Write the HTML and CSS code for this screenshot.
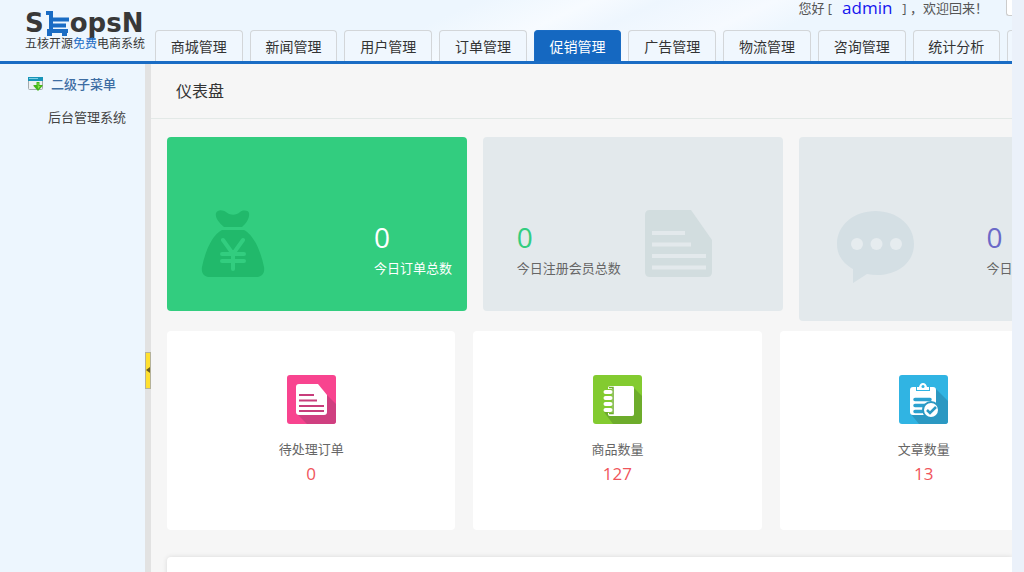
FILE: index.html
```html
<!DOCTYPE html>
<html lang="zh-CN">
<head>
<meta charset="utf-8">
<title>五核开源免费电商系统</title>
<link rel="stylesheet" href="styles.css">
</head>
<body>
<div class="page">
  <header class="header">
    <a class="logo" href="#">
      <span class="logo-name">S<svg class="logo-cart" viewBox="0 0 23 25" aria-hidden="true"><path d="M0 2h5v19M5 8.500h18M5 14.500h15M3 20h19" fill="none" stroke="#1a6cc4" stroke-width="4"/><path d="M1 18h5v7H1zM16 18h5v7h-5z" fill="#1a6cc4"/></svg>opsN</span>
      <span class="logo-sub">五核开源<em>免费</em>电商系统</span>
    </a>
    <div class="header-main">
      <div class="welcome"><span>您好 [</span><a class="user" href="#">admin</a><span>] ，欢迎回来！</span><button class="top-button" type="button" aria-label="更多"></button></div>
      <nav class="tabs">
        <a class="tab" href="#">商城管理</a>
        <a class="tab" href="#">新闻管理</a>
        <a class="tab" href="#">用户管理</a>
        <a class="tab" href="#">订单管理</a>
        <a class="tab tab-active" href="#">促销管理</a>
        <a class="tab" href="#">广告管理</a>
        <a class="tab" href="#">物流管理</a>
        <a class="tab" href="#">咨询管理</a>
        <a class="tab" href="#">统计分析</a>
        <a class="tab" href="#" aria-label="更多"></a>
      </nav>
    </div>
  </header>
  <div class="body">
    <aside class="sidebar">
      <div class="menu-title"><svg class="menu-icon" viewBox="0 0 15 14" aria-hidden="true"><rect x=".5" y=".5" width="14" height="12" rx="1" fill="#eef0f1" stroke="#a3aaad"/><path d="M0 0h15v4H0z" fill="#1794b8"/><path d="M1 1h9v1H1z" fill="#7fd0e4"/><path d="M8.500 5h3v3h3v1l-4.500 5-4.500-5V8h3z" fill="#43b516"/><path d="M9.500 6h1v3h2l-2.500 3z" fill="#8ee04e"/></svg><span>二级子菜单</span></div>
      <a class="menu-item" href="#">后台管理系统</a>
    </aside>
    <div class="splitter"><button class="handle" type="button" aria-label="收起菜单"><svg viewBox="0 0 4 6" width="4" height="6"><path d="M4 0v6L0 3z" fill="#6b5d20"/></svg></button></div>
    <main class="main">
      <h1 class="title">仪表盘</h1>
      <div class="content">
        <section class="stats">
          <div class="stat stat-green">
            <svg class="stat-icon" viewBox="0 0 64 67" aria-hidden="true"><path d="M23 17C17 12 14 7 15 3c2-4 7-3 10-1 3 3 10 4 14 0 3-2 8-2 9 1 1 5-3 11-7 14zM21 20h22c10 5 17 22 20 37 1 6-2 10-8 10H9c-6 0-9-4-8-10 3-15 10-32 20-37z" fill="#21b96b"/><path d="M22 30l10 14 10-14M32 44v15M21 44h22M21 51h22" fill="none" stroke="#32cd7f" stroke-width="4" stroke-linecap="round"/></svg>
            <div class="stat-text"><strong>0</strong><span>今日订单总数</span></div>
          </div>
          <div class="stat stat-doc">
            <div class="stat-text"><strong>0</strong><span>今日注册会员总数</span></div>
            <svg class="stat-icon" viewBox="0 0 67 67" aria-hidden="true"><path d="M5 0h41l21 30v32q0 5-5 5H5q-5 0-5-5V5q0-5 5-5z" fill="#d2dddf"/><path d="M7 23h33M7 34.500h39M7 46h54M7 57.500h54" stroke="#e3e9ec" stroke-width="4"/></svg>
          </div>
          <div class="stat stat-ask">
            <svg class="stat-icon" viewBox="0 0 77 75" aria-hidden="true"><path d="M38.500 1C60 1 77 15 77 34c0 22-23 35-47 30L16 73V59C5 53 0 44 0 34 0 15 17 1 38.500 1z" fill="#d4dfe4"/><g fill="#e6ecef"><circle cx="20" cy="34" r="6"/><circle cx="39.500" cy="34" r="6"/><circle cx="59" cy="34" r="6"/></g></svg>
            <div class="stat-text"><strong>0</strong><span>今日提问总数</span></div>
          </div>
        </section>
        <section class="tiles">
          <a class="tile" href="#">
            <svg class="tile-icon" viewBox="0 0 49 49" aria-hidden="true"><rect width="49" height="49" rx="3" fill="#f8448f"/><path d="M40 20l9 9v17q0 3-3 3H20L9 38z" fill="#cf3f80"/><path d="M12 9h19l9 11v17q0 3-3 3H12q-3 0-3-3V12q0-3 3-3z" fill="#fff"/><path d="M12 20h15M12 25.500h18M12 31h25M12 36h25" stroke="#c83d7b" stroke-width="2"/></svg>
            <span>待处理订单</span><strong>0</strong>
          </a>
          <a class="tile" href="#">
            <svg class="tile-icon" viewBox="0 0 49 49" aria-hidden="true"><rect width="49" height="49" rx="3" fill="#83cb30"/><path d="M40 12l9 9v25q0 3-3 3H20L11 37z" fill="#6dac2b"/><rect x="15" y="11" width="26" height="30" rx="2" fill="#fff"/><path d="M16 12.500h4v26h-4" fill="none" stroke="#6dac2b" stroke-width="1.500"/><path d="M15 14h4v24h-4z" fill="#83cb30"/><path d="M12.500 17h5M12.500 23h5M12.500 29h5M12.500 35h5" stroke="#fff" stroke-width="4" stroke-linecap="round"/></svg>
            <span>商品数量</span><strong>127</strong>
          </a>
          <a class="tile" href="#">
            <svg class="tile-icon" viewBox="0 0 49 49" aria-hidden="true"><rect width="49" height="49" rx="3" fill="#30b4e3"/><path d="M37 14l12 12v20q0 3-3 3H20L11 38z" fill="#2b98c2"/><path d="M14 12h3v4h14v-4h3q3 0 3 3v22q0 3-3 3H14q-3 0-3-3V15q0-3 3-3z" fill="#fff"/><path d="M18 15v-3h2q1-4 4-4t4 4h2v3z" fill="#fff"/><circle cx="24" cy="11.500" r="1.500" fill="#30b4e3"/><path d="M16 24.500h15M16 30.500h10M16 36.500h7" stroke="#2ba1cf" stroke-width="3.500" stroke-linecap="round"/><circle cx="32" cy="35" r="8" fill="#fff" stroke="#2b98c2" stroke-width="2"/><path d="M28 35l3 3 6-6" fill="none" stroke="#2b98c2" stroke-width="2.500"/></svg>
            <span>文章数量</span><strong>13</strong>
          </a>
        </section>
        <section class="panel"></section>
      </div>
    </main>
  </div>
</div>
</body>
</html>
```
FILE: styles.css
```css
* { box-sizing: border-box; }
body {
  margin: 0;
  padding-right: 12px;
  background: #ebf1fa;
  color: #444;
  font: 13px/20px "Open Sans", "Noto Sans CJK SC", sans-serif;
}
a { color: inherit; text-decoration: none; }
button { padding: 0; }
.page { display: flex; flex-direction: column; height: 100vh; overflow: hidden; }

.header {
  display: flex;
  flex: none;
  border-bottom: 3px solid #1a6cc4;
  background: linear-gradient(155deg, #edf6fe 0 42%, #f7fbff 52%, #eef6fe 58%, #f6faff 68%, #edf6fe 74%);
}
.logo { flex: none; width: 155px; padding: 10px 0 0 25px; color: #383838; white-space: nowrap; }
.logo-name { display: flex; align-items: center; height: 26px; font: bold 26px/28px "DejaVu Sans", sans-serif; }
.logo-cart { flex: none; width: 23px; height: 25px; margin: 0 1px 0 2px; }
.logo-sub { display: block; font-size: 12px; line-height: 16px; }
.logo-sub em { color: #1a6cc4; font-style: normal; }
.header-main { flex: 1; min-width: 0; overflow: hidden; }
.welcome { display: flex; align-items: center; justify-content: flex-end; height: 30px; padding-bottom: 14px; color: #555; white-space: nowrap; }
.user { margin: 0 10px; color: #1414ee; font-size: 17px; line-height: 16px; }
.top-button { align-self: flex-start; width: 6px; height: 16px; margin-left: 18px; border: 1px solid #ccc; border-width: 0 0 1px 1px; border-radius: 0 0 0 3px; background: #fff; }
.tabs { display: grid; grid-auto-flow: column; grid-auto-columns: calc(10% + 2px); gap: 7px; }
.tab {
  height: 31px;
  border: 1px solid #d3d6d9;
  border-bottom: 0;
  border-radius: 4px 4px 0 0;
  background: #f0f7fe;
  color: #333;
  font-size: 14px;
  line-height: 32px;
  text-align: center;
}
.tab-active { border-color: #1a6cc4; background: #1568c1; color: #fff; }

.body { display: flex; flex: 1; min-height: 0; }
.sidebar { flex: none; width: 145px; padding-top: 10px; background: #edf6fe; }
.menu-title { display: flex; align-items: center; gap: 8px; padding-left: 28px; color: #3d6da3; font-weight: 500; }
.menu-icon { width: 15px; height: 14px; }
.menu-item { display: block; padding: 13px 0 0 48px; }
.splitter { display: flex; flex: none; align-items: center; width: 6px; padding-top: 104px; background: #e2e2e2; }
.handle { display: flex; align-items: center; justify-content: center; width: 6px; height: 37px; border: 1px solid #b5b29a; background: #ffe030; }

.main { flex: 1; min-width: 0; overflow: hidden; background: #f6f6f6; }
.title { margin: 0; padding: 13px 25px; border-bottom: 1px solid #e3e9e7; color: #333; font-size: 16px; font-weight: 400; line-height: 28px; }
.content { padding: 18px 0 0 16px; }
.stats { display: flex; align-items: flex-start; gap: 16px; }
.stat { display: flex; flex: none; align-items: flex-start; width: calc(35% + 4px); height: 174px; padding: 73px 0 0 34px; border-radius: 4px; background: #e3e9ec; }
.stat-icon { flex: none; width: 67px; }
.stat-text { display: flex; flex-direction: column; padding-top: 10px; white-space: nowrap; }
.stat-text strong { padding-bottom: 4px; font-size: 28px; font-weight: 400; line-height: 34px; }
.stat-text span { color: #666; }
.stat-green { gap: 109px; background: #32cd7f; }
.stat-green .stat-icon { width: 64px; }
.stat-green strong, .stat-green span { color: #fff; }
.stat-doc { gap: 24px; }
.stat-doc strong { color: #32cd7f; }
.stat-ask { gap: 73px; height: 184px; padding-left: 38px; }
.stat-ask .stat-icon { width: 77px; }
.stat-ask strong { color: #6b69c8; }

.tiles { display: flex; gap: 18px; margin-top: 10px; }
.tile { display: flex; flex: none; flex-direction: column; align-items: center; width: calc(34% + 1px); height: 199px; padding-top: 44px; border-radius: 4px; background: #fff; }
.tile-icon { width: 49px; height: 49px; margin-bottom: 15px; }
.tile span { color: #666; }
.tile strong { color: #f0555b; font-size: 17px; font-weight: 400; line-height: 30px; }
.panel { height: 200px; margin-top: 27px; border-radius: 4px 0 0 4px; background: #fff; box-shadow: 0 0 5px rgba(0, 0, 0, .12); }
```
